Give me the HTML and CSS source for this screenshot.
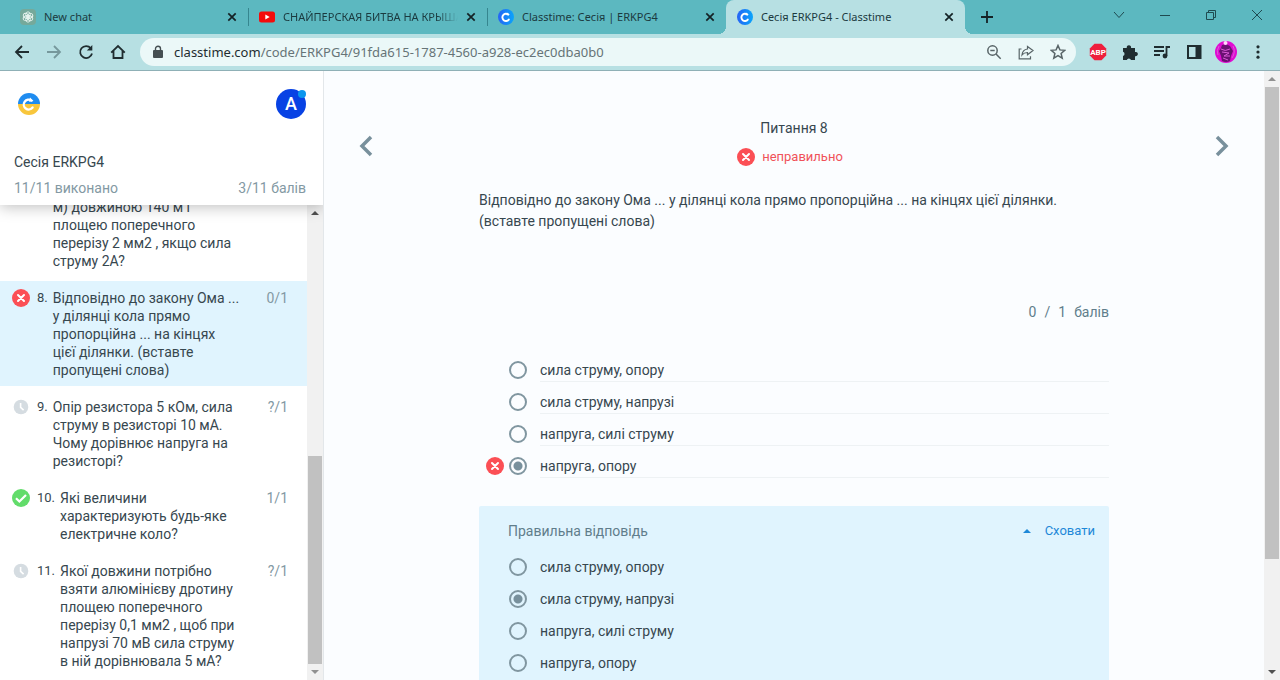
FILE: index.html
```html
<!DOCTYPE html>
<html lang="uk">
<head>
<meta charset="utf-8">
<title>Сесія ERKPG4 - Classtime</title>
<link rel="stylesheet" href="styles.css">
</head>
<body>
<svg class="defs" aria-hidden="true">
  <symbol id="wrong" viewBox="0 0 18 18"><circle cx="9" cy="9" r="9" fill="#fb4f55"/><path d="M6 6l6 6M12 6l-6 6" stroke="#fff" stroke-width="2" stroke-linecap="round"/></symbol>
  <symbol id="right" viewBox="0 0 18 18"><circle cx="9" cy="9" r="9" fill="#62dc6a"/><path d="M4 9.200l3.400 3.300L14 6" fill="none" stroke="#fff" stroke-width="2.200"/></symbol>
  <symbol id="clock" viewBox="0 0 18 18"><circle cx="9" cy="9" r="7.300" fill="#d5dce1"/><path d="M8.600 5v4.300l3 2.800" fill="none" stroke="#fff" stroke-width="1.600"/></symbol>
  <symbol id="x" viewBox="0 0 10 10"><path d="M1.300 1.300l7.400 7.400M8.700 1.300L1.300 8.700" stroke="currentColor" stroke-width="1.700"/></symbol>
  <symbol id="classtime" viewBox="0 0 16 16"><linearGradient id="blue" x1="0" x2="1"><stop offset="0" stop-color="#2563f5"/><stop offset="1" stop-color="#0aa5fb"/></linearGradient><circle cx="8" cy="8" r="8" fill="url(#blue)"/><path d="M10.300 5.600A3.600 3.600 0 1 0 10.800 10.600" fill="none" stroke="#fff" stroke-width="1.900" stroke-linecap="round"/><path d="M9.300 3.400l2.300 2.500-3 .3z" fill="#fff"/></symbol>
</svg>

<header class="browser">
  <nav class="tabs">
    <div class="tab">
      <svg class="fav" viewBox="0 0 16 16"><rect width="16" height="16" rx="4" fill="#75a99b"/><g fill="none" stroke="#e8f4ef" stroke-width=".9"><ellipse cx="8" cy="5.800" rx="2.300" ry="3"/><ellipse cx="8" cy="5.800" rx="2.300" ry="3" transform="rotate(60 8 8)"/><ellipse cx="8" cy="5.800" rx="2.300" ry="3" transform="rotate(120 8 8)"/><ellipse cx="8" cy="5.800" rx="2.300" ry="3" transform="rotate(180 8 8)"/><ellipse cx="8" cy="5.800" rx="2.300" ry="3" transform="rotate(240 8 8)"/><ellipse cx="8" cy="5.800" rx="2.300" ry="3" transform="rotate(300 8 8)"/></g></svg>
      <span class="tab-name">New chat</span><button class="close" aria-label="Закрити"><svg><use href="#x"/></svg></button>
    </div>
    <div class="tab divided">
      <svg class="fav" viewBox="0 0 16 16"><rect y="2.500" width="16" height="11" rx="2.500" fill="#f40b0b"/><path d="M6.300 5.500v5L10.700 8z" fill="#fff"/></svg>
      <span class="tab-name fade">СНАЙПЕРСКАЯ БИТВА НА КРЫШАХ</span><button class="close" aria-label="Закрити"><svg><use href="#x"/></svg></button>
    </div>
    <div class="tab divided">
      <svg class="fav"><use href="#classtime"/></svg>
      <span class="tab-name">Classtime: Сесія | ERKPG4</span><button class="close" aria-label="Закрити"><svg><use href="#x"/></svg></button>
    </div>
    <div class="tab active">
      <svg class="fav"><use href="#classtime"/></svg>
      <span class="tab-name">Сесія ERKPG4 - Classtime</span><button class="close" aria-label="Закрити"><svg><use href="#x"/></svg></button>
    </div>
    <button class="new-tab" aria-label="Нова вкладка"><svg width="12" height="12" viewBox="0 0 12 12"><path d="M6 0v12M0 6h12" stroke="#142225" stroke-width="1.800"/></svg></button>
    <div class="window-controls">
      <button aria-label="Пошук вкладок"><svg viewBox="0 0 12 12"><path d="M1 3l5 5.500L11 3"/></svg></button>
      <button aria-label="Згорнути"><svg viewBox="0 0 12 12"><path d="M1 6.500h10"/></svg></button>
      <button aria-label="Відновити"><svg viewBox="0 0 12 12"><path d="M1.500 3.500h7v7h-7zM3.500 3.500v-2h7v7h-2"/></svg></button>
      <button aria-label="Закрити вікно"><svg viewBox="0 0 12 12"><path d="M1 1l10 10M11 1L1 11"/></svg></button>
    </div>
  </nav>
  <div class="toolbar">
    <div class="nav-buttons">
      <button aria-label="Назад"><svg viewBox="0 0 16 16"><path d="M15 8H2M8 2L2 8l6 6"/></svg></button>
      <button class="off" aria-label="Вперед"><svg viewBox="0 0 16 16"><path d="M1 8h13M8 2l6 6-6 6"/></svg></button>
      <button aria-label="Оновити"><svg viewBox="0 0 16 16"><path d="M12.800 4.200A6 6 0 1 0 14 9.500"/><path d="M14.300 1v5.500H8.800z" fill="#1f2d30" stroke="none"/></svg></button>
      <button aria-label="Додому"><svg viewBox="0 0 16 16"><path d="M1.200 8.600L8 2l6.800 6.600M3.500 7v7h9V7"/></svg></button>
    </div>
    <div class="address">
      <svg class="lock" viewBox="0 0 10 14"><rect y="5" width="10" height="8" rx="1" fill="#454f52"/><path d="M2.500 5.500V3.800a2.500 2.500 0 0 1 5 0v1.700" fill="none" stroke="#454f52" stroke-width="1.400"/></svg>
      <span class="url"><b>classtime.com</b>/code/ERKPG4/91fda615-1787-4560-a928-ec2ec0dba0b0</span>
      <button aria-label="Масштаб"><svg viewBox="0 0 16 16"><circle cx="6.500" cy="6.500" r="4.700"/><path d="M10 10l4.700 4.700M4.300 6.500h4.400"/></svg></button>
      <button aria-label="Поділитися"><svg viewBox="0 0 16 16"><path d="M3.500 5H1.200v9.800h11.300v-2.500" stroke-width="1.200"/><path d="M9.500 2.500L15 6.600l-5.500 4.200V8.500C7 8.500 5.300 9.300 4 11c.3-3.500 2.300-5.600 5.500-6z" stroke-width="1.200"/></svg></button>
      <button aria-label="Закладка"><svg viewBox="0 0 16 16"><path d="M8 1.500l1.900 4.400 4.800.4-3.600 3.200 1.100 4.700L8 11.700l-4.200 2.500 1.100-4.700-3.600-3.200 4.800-.4z"/></svg></button>
    </div>
    <div class="extensions">
      <button aria-label="ABP"><svg viewBox="0 0 18 18"><path d="M5.500.8h7l4.700 4.700v7l-4.700 4.700h-7L.8 12.500v-7z" fill="#ee1f3d"/><text x="9" y="11.800" class="abp">ABP</text></svg></button>
      <button aria-label="Розширення"><svg viewBox="0 0 18 18"><path d="M2 5h3.800a2.200 2.200 0 1 1 4.200 0h4v4a2.200 2.200 0 1 1 0 4.200V17h-4a2.200 2.200 0 0 0-4.200 0H2v-4a2.200 2.200 0 0 0 0-4.200z" fill="#1f2d30"/></svg></button>
      <button aria-label="Медіа"><svg viewBox="0 0 18 18"><path d="M1 4h10M1 8h10M1 12h6M13.500 13V4H17" fill="none" stroke="#1f2d30" stroke-width="1.800"/><circle cx="12" cy="13" r="2.400" fill="#1f2d30"/></svg></button>
      <button aria-label="Бічна панель"><svg viewBox="0 0 18 18"><path d="M3 3h12.500v12H3z" fill="none" stroke="#1f2d30" stroke-width="2"/><path d="M10.500 3h5v12h-5z" fill="#1f2d30"/></svg></button>
      <button class="profile" aria-label="Профіль"><svg viewBox="0 0 22 22"><circle cx="11" cy="11" r="11" fill="#e00ad2"/><path d="M7 4q-1 4-3 6l2 5 1 5q4 2 8 0l1-5 2-5-3-5-4-2z" fill="#6b1173"/><path d="M6 8q4 3 9 0M7 11l7 1-5 3h6M8 17l5 2M4 5q-3 5-1 9M18 5q3 6-1 12" fill="none" stroke="#d95bd6" stroke-width="1"/><circle cx="10.500" cy="2" r="2" fill="#ffd9fa"/></svg></button>
      <button aria-label="Меню"><svg viewBox="0 0 18 18" fill="#1f2d30"><circle cx="9" cy="3.800" r="1.600"/><circle cx="9" cy="9" r="1.600"/><circle cx="9" cy="14.200" r="1.600"/></svg></button>
    </div>
  </div>
</header>

<div class="page">
  <aside class="sidebar">
    <div class="side-head">
      <div class="brand">
        <svg class="logo" viewBox="0 0 22 22"><path d="M0 11a11 11 0 0 1 22 0z" fill="#1f8cf0"/><path d="M0 11a11 11 0 0 0 22 0z" fill="#f8c63c"/><path d="M13.500 7.600A4.900 4.900 0 1 0 14.600 14.500" fill="none" stroke="#fff" stroke-width="2.300" stroke-linecap="round"/><path d="M12 4.500l3.500 3.500-4.500.8z" fill="#fff"/></svg>
        <button class="avatar">A</button>
      </div>
      <h1>Сесія ERKPG4</h1>
      <div class="totals"><span>11/11 виконано</span><span>3/11 балів</span></div>
    </div>
    <div class="side-body">
      <div class="questions">
        <div class="question">
          <svg class="mark"><use href="#clock"/></svg><span class="num">7.</span>
          <p>Який питомий опір дроту (Ом *<br>м) довжиною 140 м і площею поперечного перерізу 2 мм2 , якщо сила струму 2А?</p><span class="points">?/1</span>
        </div>
        <div class="question current">
          <svg class="mark"><use href="#wrong"/></svg><span class="num">8.</span>
          <p>Відповідно до закону Ома ... у ділянці кола прямо пропорційна ... на кінцях цієї ділянки. (вставте пропущені слова)</p><span class="points">0/1</span>
        </div>
        <div class="question">
          <svg class="mark"><use href="#clock"/></svg><span class="num">9.</span>
          <p>Опір резистора 5 кОм, сила струму в резисторі 10 мА. Чому дорівнює напруга на резисторі?</p><span class="points">?/1</span>
        </div>
        <div class="question">
          <svg class="mark"><use href="#right"/></svg><span class="num">10.</span>
          <p>Які величини характеризують будь-яке електричне коло?</p><span class="points">1/1</span>
        </div>
        <div class="question">
          <svg class="mark"><use href="#clock"/></svg><span class="num">11.</span>
          <p>Якої довжини потрібно взяти алюмінієву дротину площею поперечного перерізу 0,1 мм2 , щоб при напрузі 70 мВ сила струму в ній дорівнювала 5 мА?</p><span class="points">?/1</span>
        </div>
      </div>
      <div class="scrollbar at-end"><i class="up"></i><i class="thumb"></i><i class="down"></i></div>
    </div>
  </aside>

  <main class="main">
    <button class="step" aria-label="Попереднє питання"><svg viewBox="0 0 22 22"><path d="M15 2L6 11l9 9"/></svg></button>
    <section class="content">
      <h2>Питання 8</h2>
      <div class="verdict"><svg class="mark"><use href="#wrong"/></svg><span>неправильно</span></div>
      <p class="prompt">Відповідно до закону Ома ... у ділянці кола прямо пропорційна ... на кінцях цієї ділянки. (вставте пропущені слова)</p>
      <div class="score"><span>0</span><span>/</span><span>1</span><span class="unit">балів</span></div>
      <div class="answers">
        <label><span class="slot"></span><input type="radio" name="given"><span class="answer">сила струму, опору</span></label>
        <label><span class="slot"></span><input type="radio" name="given"><span class="answer">сила струму, напрузі</span></label>
        <label><span class="slot"></span><input type="radio" name="given"><span class="answer">напруга, силі струму</span></label>
        <label><span class="slot"><svg class="mark"><use href="#wrong"/></svg></span><input type="radio" name="given" checked><span class="answer">напруга, опору</span></label>
      </div>
      <div class="solution">
        <div class="solution-head"><h3>Правильна відповідь</h3><button class="hide"><i></i>Сховати</button></div>
        <div class="answers">
          <label><span class="slot"></span><input type="radio" name="correct"><span class="answer">сила струму, опору</span></label>
          <label><span class="slot"></span><input type="radio" name="correct" checked><span class="answer">сила струму, напрузі</span></label>
          <label><span class="slot"></span><input type="radio" name="correct"><span class="answer">напруга, силі струму</span></label>
          <label><span class="slot"></span><input type="radio" name="correct"><span class="answer">напруга, опору</span></label>
        </div>
      </div>
    </section>
    <button class="step" aria-label="Наступне питання"><svg viewBox="0 0 22 22"><path d="M7 2l9 9-9 9"/></svg></button>
  </main>
  <div class="scrollbar at-start"><i class="up"></i><i class="thumb"></i><i class="down"></i></div>
</div>
</body>
</html>
```
FILE: styles.css
```css
* { box-sizing: border-box; }

body {
  margin: 0;
  height: 100vh;
  display: flex;
  flex-direction: column;
  overflow: hidden;
  font: 14px/18px Roboto, sans-serif;
  color: #37474f;
}

h1, h2, h3, p { margin: 0; font-size: 14px; font-weight: 400; }
svg { display: block; flex: none; }
.defs { position: absolute; width: 0; height: 0; }

button {
  display: flex;
  align-items: center;
  justify-content: center;
  flex: none;
  padding: 0;
  border: 0;
  background: none;
  color: inherit;
  font: inherit;
}

/* Browser frame */
.browser { flex: none; font-family: "Noto Sans", sans-serif; border-bottom: 1px solid #8fb0b6; }

.tabs {
  display: flex;
  height: 34px;
  padding-left: 9px;
  background: #5cb8c0;
  color: #1b3a3f;
  font-size: 11px;
}

.tab {
  position: relative;
  display: flex;
  align-items: center;
  flex: 0 1 239px;
  min-width: 0;
  padding: 0 11px;
  gap: 8px;
}
.divided::before {
  content: "";
  position: absolute;
  left: 0;
  top: 8px;
  width: 1px;
  height: 18px;
  background: #36868f;
}
.active { background: #b7e0e3; border-radius: 8px 8px 0 0; }
.active::before, .active::after {
  content: "";
  position: absolute;
  bottom: 0;
  width: 8px;
  height: 8px;
}
.active::before { right: 100%; background: radial-gradient(circle at 0 0, transparent 8px, #b7e0e3 8px); }
.active::after { left: 100%; background: radial-gradient(circle at 100% 0, transparent 8px, #b7e0e3 8px); }
.fav { width: 16px; height: 16px; }
.tab-name { flex: 1; overflow: hidden; white-space: nowrap; }
.fade { mask-image: linear-gradient(to right, #000 88%, transparent); }
.close { width: 10px; height: 10px; color: #142225; }
.close svg { width: 10px; height: 10px; }
.new-tab { width: 44px; }
.window-controls { display: flex; align-items: center; margin-left: auto; height: 30px; }
.window-controls button { width: 46px; }
.window-controls svg { width: 12px; height: 12px; fill: none; stroke: #1f4a50; stroke-width: 1; }

.toolbar {
  display: flex;
  align-items: center;
  height: 36px;
  padding: 0 13px 0 14px;
  background: #b7e0e3;
}
.nav-buttons { display: flex; gap: 16px; }
.nav-buttons svg { width: 16px; height: 16px; fill: none; stroke: #1f2d30; stroke-width: 1.8; }
.nav-buttons .off svg { stroke: #76989c; }
.address {
  display: flex;
  align-items: center;
  flex: 1;
  min-width: 0;
  height: 28px;
  margin: 0 13px 0 14px;
  padding: 0 10px 0 13px;
  border-radius: 14px;
  background: #ebf8f8;
}
.lock { width: 10px; height: 14px; }
.url { flex: 1; min-width: 0; margin-left: 11px; overflow: hidden; white-space: nowrap; font-size: 13px; color: #667477; }
.url b { font-weight: 400; color: #1f2d30; }
.address button { margin-left: 16px; }
.address button svg { width: 16px; height: 16px; fill: none; stroke: #586467; stroke-width: 1.5; }
.extensions { display: flex; align-items: center; gap: 14px; }
.extensions svg { width: 18px; height: 18px; }
.extensions .profile { margin: 0 -2px; }
.extensions .profile svg { width: 22px; height: 22px; }
.abp { font: 700 8px Roboto, sans-serif; fill: #fff; text-anchor: middle; }

/* Page */
.page { display: flex; flex: 1; min-height: 0; background: #fbfdff; }
.mark { width: 18px; height: 18px; }

.sidebar {
  display: flex;
  flex-direction: column;
  flex: none;
  width: 324px;
  background: #fff;
  border-right: 1px solid #e3e7ea;
}
.side-head {
  position: relative;
  z-index: 1;
  flex: none;
  padding: 18px 17px 8px 14px;
  background: #fff;
  box-shadow: 0 2px 14px rgba(0, 0, 0, .25);
  clip-path: inset(0 0 -20px 0);
}
.brand { display: flex; align-items: center; justify-content: space-between; padding-left: 4px; margin-bottom: 34px; }
.logo { width: 22px; height: 22px; }
.avatar {
  position: relative;
  width: 30px;
  height: 30px;
  border-radius: 50%;
  background: #0842e4;
  color: #fff;
  font-size: 18px;
  font-weight: 500;
}
.avatar::after {
  content: "";
  position: absolute;
  top: 1px;
  right: 0;
  width: 8px;
  height: 8px;
  border-radius: 50%;
  background: #0b96ee;
}
.totals { display: flex; justify-content: space-between; margin-top: 8px; color: #8399a3; }

.side-body { display: flex; flex: 1; min-height: 0; }
.questions {
  display: flex;
  flex-direction: column;
  justify-content: flex-end;
  flex: 1;
  gap: 4px;
  padding-bottom: 3px;
  overflow: hidden;
}
.question { display: flex; flex: none; padding: 8px 19px 7px 12px; }
.current { background: #e0f4fe; }
.num { margin: 0 5px 0 7px; font-size: 13px; }
.question p { flex: 1; padding-right: 26px; }
.points { color: #8399a3; }

.main {
  display: flex;
  align-items: flex-start;
  justify-content: space-between;
  flex: 1;
  min-width: 0;
  padding: 0 32px;
  overflow: hidden;
}
.step { margin-top: 64px; }
.step svg { width: 22px; height: 22px; fill: none; stroke: #78909c; stroke-width: 3.5; }
.content { flex: 0 1 630px; padding-top: 48px; }
.content h2 { text-align: center; }
.verdict {
  display: flex;
  align-items: center;
  justify-content: center;
  gap: 7px;
  margin: 11px 0 24px;
  padding-right: 8px;
  color: #f0525a;
  font-size: 13px;
}
.prompt { line-height: 21px; }
.score { display: flex; justify-content: flex-end; gap: 8px; margin: 71px 0 33px; color: #607d8b; }

.answers label { display: flex; height: 32px; align-items: center; }
.slot { width: 18px; margin: 0 5px 0 7px; }
.answers input {
  appearance: none;
  flex: none;
  width: 18px;
  height: 18px;
  margin: 0 13px 0 0;
  border: 2px solid #8096a0;
  border-radius: 50%;
}
.answers input:checked { background: radial-gradient(circle, #78909c 4px, transparent 5px); }
.answer { flex: 1; padding: 3px 0 2px; border-bottom: 1px solid #eef2f4; }
.solution { margin-top: 24px; padding-bottom: 16px; border-radius: 2px; background: #e0f4fe; }
.solution-head { display: flex; align-items: center; justify-content: space-between; padding: 16px 14px 11px 29px; }
.solution h3 { color: #607d8b; }
.solution .answer { border-color: transparent; }
.hide { color: #1e88d8; font-size: 13px; gap: 14px; }
.hide i { border: 4px solid transparent; border-top: 0; border-bottom: 4px solid #1e88d8; }

/* Scroll bars */
.scrollbar {
  display: flex;
  flex-direction: column;
  align-items: center;
  flex: none;
  width: 16px;
  padding: 6px 0;
  background: #f1f1f1;
}
.up, .down { flex: none; border: 4px solid transparent; }
.up { border-top: 0; border-bottom-color: #505050; }
.down { border-bottom: 0; border-top-color: #505050; }
.thumb { width: 14px; background: #c1c1c1; }
.at-end .thumb { flex: 0 0 45%; margin-top: auto; margin-bottom: 6px; }
.at-end .down, .at-start .up { opacity: .6; }
.at-start .thumb { flex: 0 0 79%; margin-top: 6px; }
.at-start .down { margin-top: auto; }
```
